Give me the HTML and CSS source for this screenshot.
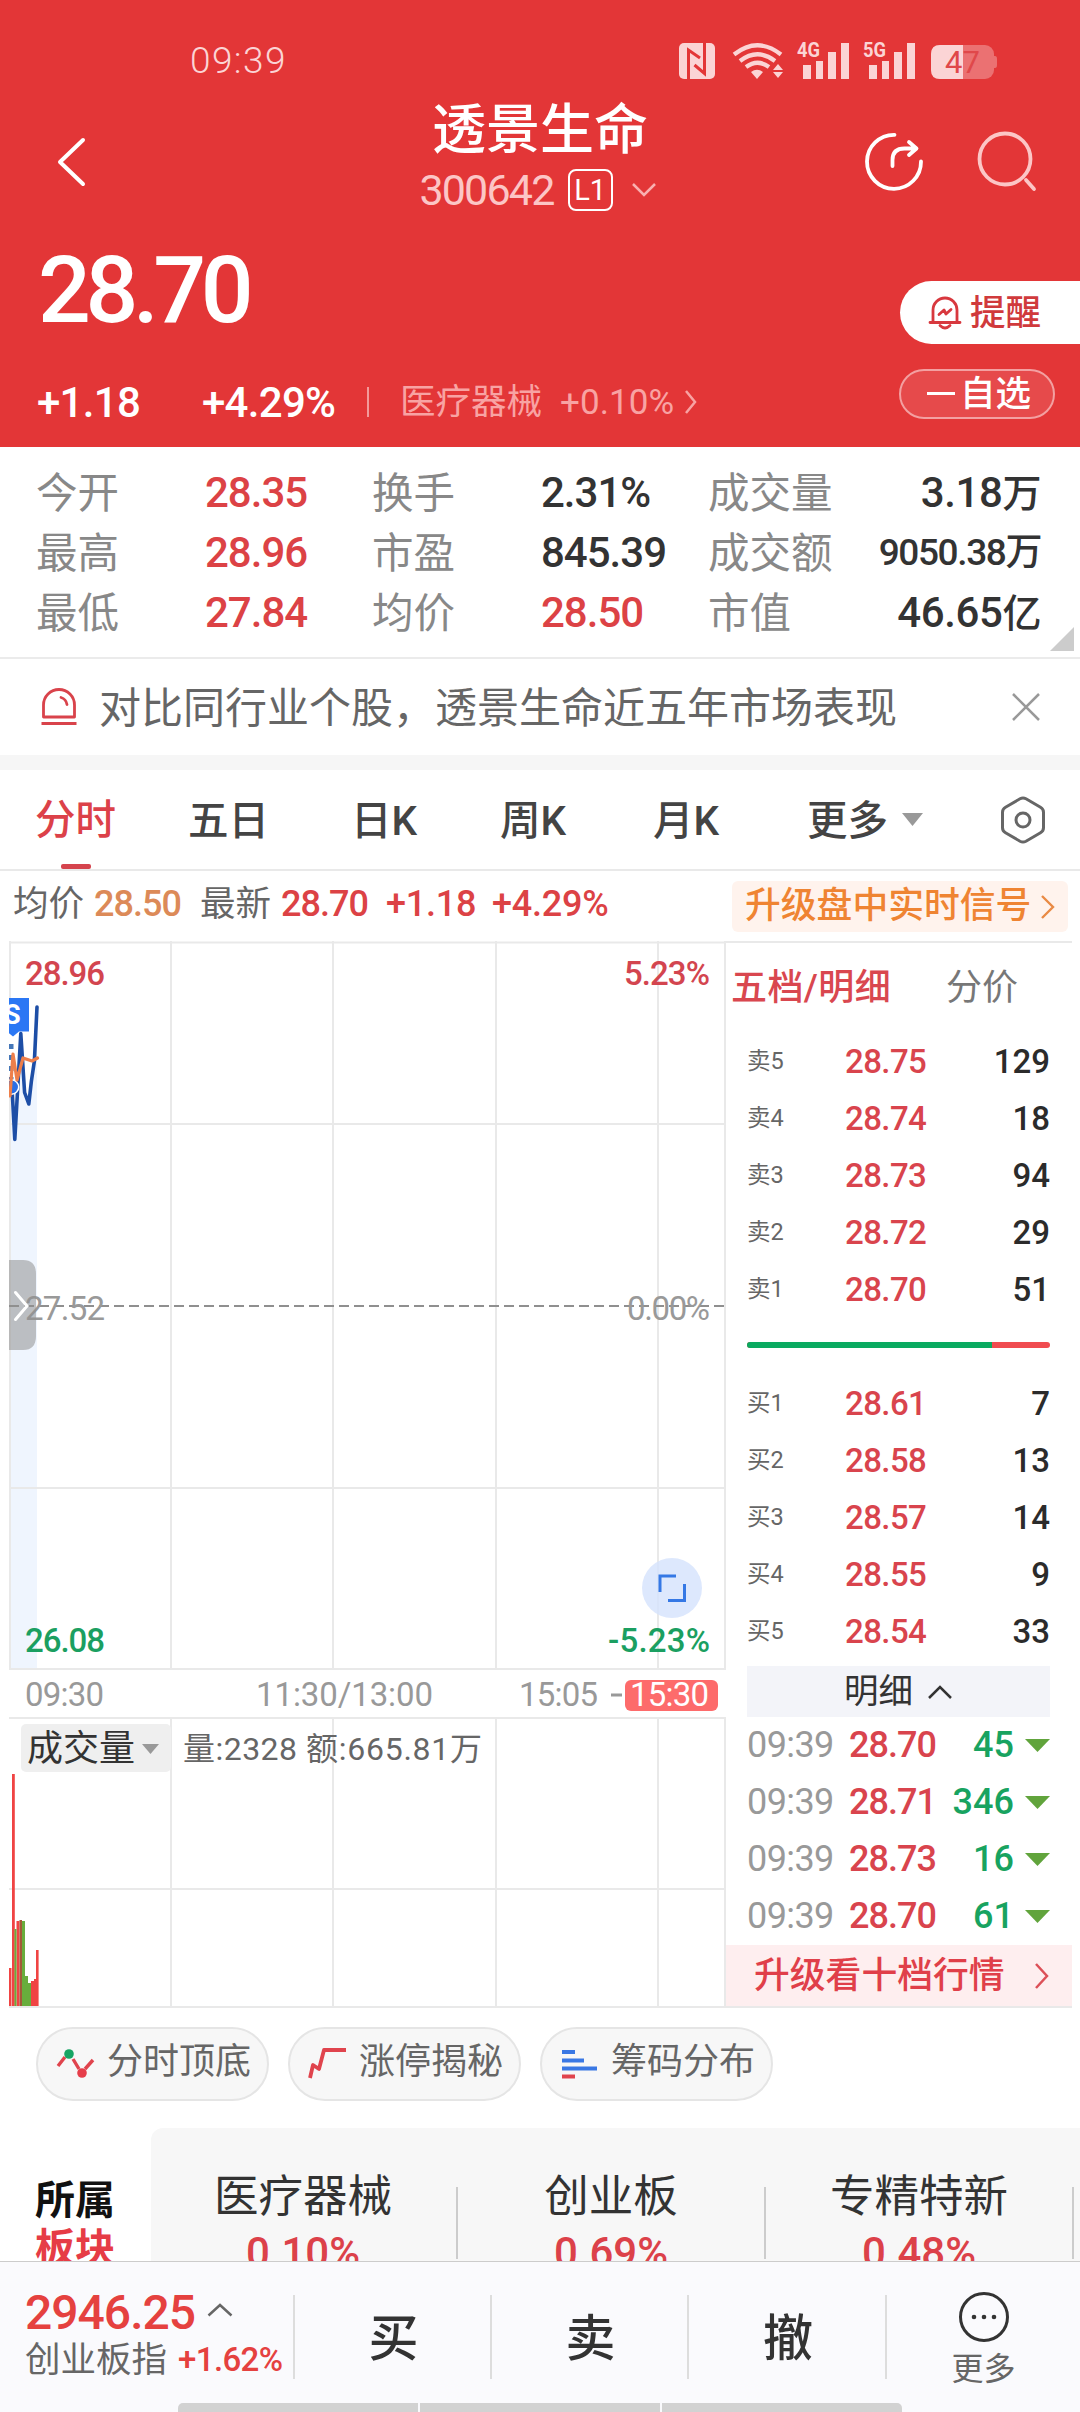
FILE: index.html
```html
<!DOCTYPE html>
<html lang="zh-CN">
<head>
<meta charset="utf-8">
<title>透景生命 300642</title>
<link rel="stylesheet" href="styles.css">
</head>
<body>
<div class="screen">
  <header class="hero">
    <div class="status">
      <span class="clock">09:39</span>
      <svg class="status-icons" width="320" height="50" viewBox="679 35 320 50">
        <g fill="#fbd4d5">
          <rect x="679" y="43" width="36" height="36" rx="5"/>
          <g fill="none" stroke="#fbd4d5" stroke-width="4.200">
            <path d="M734 54.500Q757.500 36 781 54.500"/>
            <path d="M740 61Q757.500 47.500 775 61"/>
            <path d="M746 67Q757.500 58.500 769 67"/>
          </g>
          <path d="M757 79l-6-7q6-4.500 12 0z"/>
          <path d="M778 64l5 6h-10zM778 78l5-6h-10z"/>
          <path d="M803 65h8v14h-8zM816 61h7v18h-7zM828 52h8v27h-8zM841 43h8v36h-8z"/>
          <path d="M869 65h8v14h-8zM882 61h7v18h-7zM894 52h8v27h-8zM907 43h8v36h-8z"/>
        </g>
        <path d="M688.500 79V50L700 58M704.500 43V73.500L694.500 65" fill="none" stroke="#e33637" stroke-width="3"/>
        <g class="net"><text x="797" y="57" textLength="23" lengthAdjust="spacingAndGlyphs">4G</text><text x="863" y="57" textLength="23" lengthAdjust="spacingAndGlyphs">5G</text></g>
        <rect x="931" y="45" width="63" height="34" rx="9" fill="#eb7172"/>
        <path d="M994 56h1q2 0 2 3v6q0 3-2 3h-1z" fill="#eb7172"/>
        <path d="M963 45v34h-23q-9 0-9-9V54q0-9 9-9z" fill="#fbd4d5"/>
        <text class="charge" x="945" y="73">47</text>
      </svg>
    </div>
    <div class="nav">
      <svg class="back" width="32" height="52" viewBox="0 0 32 52"><path d="M28 4L5 26l23 22" fill="none" stroke="#fff" stroke-width="4" stroke-linecap="round" stroke-linejoin="round"/></svg>
      <div class="title">
        <h1>透景生命</h1>
        <div class="code"><span>300642</span><b>L1</b><svg width="26" height="16" viewBox="0 0 26 16"><path d="M2 2l11 11L24 2" fill="none" stroke="#f9b0b0" stroke-width="2.500"/></svg></div>
      </div>
      <svg class="nav-icons" width="176" height="62" viewBox="863 131 176 62" fill="none" stroke-width="3.800" stroke-linecap="round" stroke-linejoin="round">
        <path d="M894.500 134.800A27 27 0 1 0 921 161.500" stroke="#fff"/>
        <path d="M892.500 166v-6q0-11.500 12-11.500h11M909 142l7.500 6.500L909 155" stroke="#fff"/>
        <circle cx="1005" cy="159" r="25.500" stroke="#fcc6c6"/>
        <path d="M1026 180l8 9" stroke="#fcc6c6"/>
      </svg>
    </div>
    <div class="price-row">
      <strong>28.70</strong>
      <button class="remind">
        <svg width="34" height="36" viewBox="0 0 34 36" fill="none" stroke="#d8383e" stroke-width="2.800" stroke-linecap="round" stroke-linejoin="round"><path d="M5 27V15a12 12 0 0 1 24 0v12M2 27.500h30M12 30.500q5 5 10 0M11 19.500l5-4.500 2 4 5-4.500"/></svg>
        <span>提醒</span>
      </button>
    </div>
    <div class="change-row">
      <span class="chg">+1.18</span><span class="chg pct">+4.29%</span><i class="bar"></i>
      <span class="ind">医疗器械</span><span class="ind-pct">+0.10%</span>
      <svg width="14" height="26" viewBox="0 0 14 26"><path d="M2 2l9 11-9 11" fill="none" stroke="#f8a3a3" stroke-width="2.500"/></svg>
      <button class="watch"><i></i><span>自选</span></button>
    </div>
  </header>

  <section class="quotes">
    <span>今开</span><b class="up">28.35</b><span>换手</span><b>2.31%</b><span>成交量</span><b class="end">3.18<em>万</em></b>
    <span>最高</span><b class="up">28.96</b><span>市盈</span><b>845.39</b><span>成交额</span><b class="end small">9050.38万</b>
    <span>最低</span><b class="up">27.84</b><span>均价</span><b class="up">28.50</b><span>市值</span><b class="end">46.65<em>亿</em></b>
    <i class="corner"></i>
  </section>

  <section class="notice">
    <svg width="38" height="40" viewBox="0 0 38 40" fill="none" stroke="#d9434b" stroke-width="2.800" stroke-linejoin="round"><path d="M3.500 30V18a15.500 15.500 0 0 1 31 0v12zM1.500 36.500h35"/><path d="M21 10.500q5 1.500 6 7" stroke-linecap="round"/></svg>
    <p>对比同行业个股，透景生命近五年市场表现</p>
    <svg width="30" height="30" viewBox="0 0 30 30"><path d="M2 2l26 26M28 2L2 28" stroke="#999" stroke-width="2.500"/></svg>
  </section>

  <nav class="tabs">
    <span class="on">分时</span><span>五日</span><span>日K</span><span>周K</span><span>月K</span><span>更多</span>
    <i class="down"></i>
    <svg width="46" height="48" viewBox="0 0 46 48" fill="none" stroke="#666" stroke-width="3"><path d="M20 2.800q3-1.600 6 0l14.500 8.400q3 1.700 3 5v15.600q0 3.300-3 5L26 45.200q-3 1.600-6 0L5.500 36.800q-3-1.700-3-5V16.200q0-3.300 3-5z"/><circle cx="23" cy="24" r="7"/></svg>
  </nav>

  <section class="legend">
    <span class="lbl">均价</span><span class="avg">28.50</span><span class="lbl">最新</span><span class="up">28.70</span><span class="up">+1.18</span><span class="up">+4.29%</span>
    <a class="signal"><span>升级盘中实时信号</span><svg width="16" height="26" viewBox="0 0 16 26"><path d="M2 2l11 11L2 24" fill="none" stroke="#e98a45" stroke-width="2.400"/></svg></a>
  </section>

  <section class="market">
    <svg class="chart" width="717" height="1067" viewBox="9 941 717 1067">
      <defs><clipPath id="plot"><rect x="9" y="941" width="717" height="1067"/></clipPath></defs>
      <path d="M9 1101l3-14 3 52 6-104 5 60 4 10 3-25 3-20 1-53V1669H9z" fill="#eff5fe" clip-path="url(#plot)"/>
      <g stroke="#e9e9e9" stroke-width="2" fill="none">
        <path d="M9 942.500H726M10 941V1669M171 941V1669M333 941V1669M496 941V1669M658 941V1669M725 941V1669"/>
        <path d="M9 1124H725M9 1488H725M9 1669H726M9 1718H726M9 1889H725M9 2007H726"/>
        <path d="M171 1718V2007M333 1718V2007M496 1718V2007M658 1718V2007M725 1718V2007"/>
      </g>
      <path d="M9 1306H724" stroke="#8f8f8f" stroke-width="2" stroke-dasharray="10 5"/>
      <g clip-path="url(#plot)" fill="none" stroke-linejoin="round" stroke-linecap="round">
        <path d="M11 1030v60" stroke="#fff" stroke-width="6" stroke-linecap="butt"/>
        <path d="M12 1088l2.800 51.500 6-106 3.800 59 4.200 11.500 2.600-23 3-20 2.600-54" stroke="#1d4ea6" stroke-width="3.600"/>
        <path d="M11 1044v36" stroke="#4577b8" stroke-width="5" stroke-dasharray="5 6" stroke-linecap="butt"/>
        <path d="M8 998h21v33.500h-10l-6 5-5-4z" fill="#2b77f4"/>
        <circle cx="11.500" cy="1087" r="7.200" fill="#2b6fe6" stroke="#fff" stroke-width="1.500"/>
        <path d="M10 1096l3-42 4 26 6-22 9 3 5.500-3" stroke="#ee7f4b" stroke-width="3.200"/>
        <text class="flag" x="4" y="1024">S</text>
      </g>
      <g class="axis">
        <text class="hi" x="25" y="985" textLength="80">28.96</text>
        <text class="hi" x="624" y="985" textLength="86">5.23%</text>
        <text class="mid" x="25" y="1320" textLength="80">27.52</text>
        <text class="mid" x="627" y="1320" textLength="83">0.00%</text>
        <text class="lo" x="25" y="1652" textLength="80">26.08</text>
        <text class="lo" x="608" y="1652" textLength="102">-5.23%</text>
        <text class="mid" x="25" y="1706" textLength="79">09:30</text>
        <text class="mid" x="256" y="1706" textLength="177">11:30/13:00</text>
        <text class="mid" x="519" y="1706" textLength="79">15:05</text>
        <path d="M611 1695h11" stroke="#999" stroke-width="3"/>
        <rect x="625" y="1680" width="93" height="31" rx="6" fill="#fd6b6b"/>
        <text class="inv" x="630" y="1706" textLength="79">15:30</text>
      </g>
      <path d="M9 1260h14q13 0 13 14v62q0 14-13 14H9z" fill="#8f8f8f" fill-opacity=".55"/>
      <path d="M15.500 1292.500l11.500 13.500-11.500 13.500" fill="none" stroke="#fff" stroke-width="3" stroke-linecap="round"/>
      <circle cx="672" cy="1588" r="30" fill="#d5e2fc" fill-opacity=".8"/>
      <path d="M660 1592v-16h16M668 1600.500h16.500v-16.500" fill="none" stroke="#3578e5" stroke-width="3"/>
      <rect x="21" y="1724" width="150" height="48" rx="5" fill="#efefef"/>
      <text class="picker" x="27" y="1761" textLength="108">成交量</text>
      <path d="M142 1744h17l-8.500 10z" fill="#999"/>
      <text class="vol" x="183" y="1760" textLength="114">量:2328</text>
      <text class="vol" x="306" y="1760" textLength="176">额:665.81万</text>
      <g fill="#f04443"><path d="M9 1968h2.500v38H9zM12 1774h2.800v232H12zM16.500 1921h3v85h-3zM31 1981h3v25h-3zM34 1979h2.500v27H34zM36 1950h2.600v56H36z"/></g>
      <path d="M19.500 1920h2.500v86h-2.500z" fill="#a35a38"/>
      <path d="M14.500 1929h2v77h-2zM22 1921h3v85h-3zM25 1976h3v30h-3zM28 1983h3v23h-3z" fill="#68ad3c"/>
    </svg>
    <aside class="book">
      <div class="book-tabs"><span class="on">五档/明细</span><span>分价</span></div>
      <div class="level"><i>卖5</i><b>28.75</b><span>129</span></div>
      <div class="level"><i>卖4</i><b>28.74</b><span>18</span></div>
      <div class="level"><i>卖3</i><b>28.73</b><span>94</span></div>
      <div class="level"><i>卖2</i><b>28.72</b><span>29</span></div>
      <div class="level"><i>卖1</i><b>28.70</b><span>51</span></div>
      <div class="ratio"><i></i></div>
      <div class="level"><i>买1</i><b>28.61</b><span>7</span></div>
      <div class="level"><i>买2</i><b>28.58</b><span>13</span></div>
      <div class="level"><i>买3</i><b>28.57</b><span>14</span></div>
      <div class="level"><i>买4</i><b>28.55</b><span>9</span></div>
      <div class="level"><i>买5</i><b>28.54</b><span>33</span></div>
      <div class="ticks-head"><span>明细</span><svg width="26" height="16" viewBox="0 0 26 16"><path d="M2 14L13 3l11 11" fill="none" stroke="#333" stroke-width="2.500"/></svg></div>
      <div class="tick"><i>09:39</i><b>28.70</b><span>45</span><em></em></div>
      <div class="tick"><i>09:39</i><b>28.71</b><span>346</span><em></em></div>
      <div class="tick"><i>09:39</i><b>28.73</b><span>16</span><em></em></div>
      <div class="tick"><i>09:39</i><b>28.70</b><span>61</span><em></em></div>
      <a class="upgrade"><span>升级看十档行情</span><svg width="16" height="28" viewBox="0 0 16 28"><path d="M2 2l11 12L2 26" fill="none" stroke="#dc5058" stroke-width="2.500"/></svg></a>
    </aside>
  </section>

  <section class="chips">
    <a><svg width="40" height="36" viewBox="0 0 40 36" fill="none" stroke="#e0444d" stroke-width="3.400"><path d="M2 20l7-9M17 13l6 10M29 23l8-9"/><circle cx="13" cy="8" r="4.800" fill="#17a564" stroke="none"/><circle cx="26" cy="27" r="4.800" fill="#e63e4a" stroke="none"/></svg>分时顶底</a>
    <a><svg width="40" height="36" viewBox="0 0 40 36" fill="none" stroke="#e0444d" stroke-width="3.800" stroke-linejoin="round"><path d="M2 32l3-13 6 4 5-19h22"/></svg>涨停揭秘</a>
    <a><svg width="40" height="36" viewBox="0 0 40 36" stroke="#3a78e4" stroke-width="4"><path d="M2 6h13M2 14.500h22M2 22.500h35"/><path d="M2 30.500h13" stroke="#e0444d"/></svg>筹码分布</a>
  </section>

  <section class="sectors">
    <div class="sector-title">所属<em>板块</em></div>
    <div class="sector-list">
      <div>医疗器械<b>0.10%</b></div>
      <div>创业板<b>0.69%</b></div>
      <div>专精特新<b>0.48%</b></div>
    </div>
  </section>

  <footer class="dock">
    <div class="index">
      <div class="index-top"><b>2946.25</b><svg width="26" height="14" viewBox="0 0 26 14"><path d="M1.500 12.500L13 2l11.500 10.500" fill="none" stroke="#666" stroke-width="2.500"/></svg></div>
      <div class="index-sub">创业板指<em>+1.62%</em></div>
    </div>
    <div class="act">买</div><div class="act">卖</div><div class="act">撤</div>
    <div class="more"><svg width="52" height="52" viewBox="0 0 52 52"><circle cx="26" cy="26" r="23.500" fill="none" stroke="#333" stroke-width="3"/><circle cx="16" cy="26" r="2.300" fill="#333"/><circle cx="26" cy="26" r="2.300" fill="#333"/><circle cx="36" cy="26" r="2.300" fill="#333"/></svg><span>更多</span></div>
    <div class="home"><i></i><i></i><i></i></div>
  </footer>
</div>
</body>
</html>
```
FILE: styles.css
```css
* { box-sizing: border-box; margin: 0; padding: 0; }
body { width: 1080px; height: 2412px; overflow: hidden; background: #fff; font-family: Roboto, "Noto Sans CJK SC", sans-serif; color: #333; }
i, em { font-style: normal; }
b, strong, h1 { font-weight: 500; }
svg { display: block; flex: none; }
span, p, a, b { white-space: nowrap; }
button { border: 0; background: none; font: inherit; }
.screen { display: flex; flex-direction: column; width: 1080px; height: 2412px; overflow: hidden; }
.up { color: #dc4245; }

.hero { flex: none; height: 447px; background: #e33637; color: #fff; }
.status { display: flex; height: 100px; padding: 35px 81px 0 190px; justify-content: space-between; }
.clock { margin-top: 7px; font-size: 37px; line-height: 38px; font-weight: 300; color: #fbd4d5; letter-spacing: 1.4px; }
.net { font-size: 20px; font-weight: 700; fill: #fbd4d5; }
.charge { font-size: 31px; fill: #e0484a; }
.nav { display: grid; grid-template-columns: 378px 324px 1fr; height: 120px; }
.back { margin: 36px 0 0 55px; }
.title { display: flex; flex-direction: column; align-items: center; }
.title h1 { font-size: 54px; line-height: 56px; padding-top: 3px; }
.code { display: flex; align-items: center; height: 62px; margin-left: -4px; color: #fcc6c6; font-size: 43px; }
.code span { letter-spacing: -1.8px; }
.code b { width: 45px; height: 42px; margin: 0 18px 0 14px; border: 2.5px solid #fff; border-radius: 8px; color: #fff; font-size: 29px; line-height: 38px; text-align: center; font-weight: 400; }
.nav-icons { margin: 31px 0 0 161px; }
.price-row { display: flex; justify-content: space-between; height: 134px; padding-left: 38px; }
.price-row strong { font-size: 93px; line-height: 110px; padding-top: 16px; letter-spacing: -5.4px; }
.remind { display: flex; align-items: center; width: 180px; height: 63px; margin-top: 61px; padding-left: 28px; gap: 8px; border-radius: 32px 0 0 32px; background: #fff; color: #d03a3c; font-size: 35.500px; font-weight: 500; }
.remind span { line-height: 40px; }
.change-row { display: grid; grid-template-columns: 165px 165px 33px 160px 124px 216px 156px; align-items: center; height: 64px; padding-left: 37px; margin-top: 16px; }
.chg { font-size: 42px; font-weight: 500; line-height: 60px; letter-spacing: -.7px; padding-top: 1px; }
.bar { width: 2px; height: 30px; background: #f39a9a; }
.ind { font-size: 35.500px; line-height: 40px; color: #f8a3a3; }
.ind-pct { font-size: 35px; color: #f8a3a3; letter-spacing: .1px; }
.watch { display: flex; align-items: center; width: 156px; height: 50px; margin: -17px 0 0 -1px; padding-left: 26px; border: 2px solid #f3a0a1; border-radius: 25px; background: #e64a4b; color: #fff; font-size: 35.500px; font-weight: 500; }
.watch i { width: 28px; height: 3px; margin-right: 5px; background: #fff; }
.watch span { line-height: 40px; }

.quotes { flex: none; position: relative; display: grid; grid-template-columns: 169px 167px 169px 167px 141px 192px; grid-auto-rows: 60px; height: 212px; padding: 16px 38px 0 36px; border-bottom: 2px solid #ebebeb; font-size: 41.500px; line-height: 60px; }
.quotes span { color: #888; padding-top: 1px; }
.quotes b { font-size: 42px; letter-spacing: -1px; }
.quotes .end { text-align: right; letter-spacing: -.4px; }
.quotes em { font-size: 39px; }
.quotes .small { font-size: 37px; letter-spacing: -1.400px; }
.corner { position: absolute; right: 6px; bottom: 6px; width: 24px; height: 24px; background: #ccc; clip-path: polygon(100% 0, 100% 100%, 0 100%); }

.notice { flex: none; display: flex; align-items: center; height: 96px; padding: 0 39px 0 40px; }
.notice p { margin: 0 auto 0 21px; padding-top: 3px; font-size: 42px; line-height: 60px; color: #666; }
.tabs { flex: none; display: grid; grid-template-columns: 153px 163px 149px 153px 154px 95px 98px 1fr; align-items: center; height: 116px; padding-left: 35px; border-top: 15px solid #f6f6f6; border-bottom: 2px solid #e9e9e9; font-size: 40.500px; line-height: 58px; color: #444; font-weight: 500; }
.tabs span { padding-top: 2px; }
.tabs .on { display: flex; flex-direction: column; height: 99px; padding-top: 21px; color: #dc4149; }
.tabs .on::after { content: ""; width: 30px; height: 5px; margin: 15px 0 0 26px; border-radius: 2px; background: #d5444d; }
.down { width: 21px; height: 13px; background: #999; clip-path: polygon(0 0, 100% 0, 50% 100%); }

.legend { flex: none; display: grid; grid-template-columns: 81px 106px 81px 105px 106px 240px 336px; height: 70px; padding: 10px 0 0 13px; font-size: 36px; line-height: 47px; font-weight: 500; letter-spacing: -1px; }
.legend > span:nth-child(n+5) { letter-spacing: -.2px; }
.legend .lbl { font-size: 35.500px; font-weight: 400; color: #666; letter-spacing: 0; }
.avg { color: #dc8a58; }
.signal { display: flex; align-items: center; height: 51px; padding-left: 13px; gap: 9px; border-radius: 6px; background: #fff3ed; color: #ef8432; font-size: 35.800px; letter-spacing: 0; }
.signal span { padding-bottom: 1px; }

.market { flex: none; display: flex; height: 1067px; padding-left: 9px; }
.flag { font-size: 27px; font-weight: 700; fill: #fff; }
.axis { font-size: 33px; }
.hi { fill: #d3454f; font-weight: 500; }
.mid { fill: #999; }
.lo { fill: #1b9f61; font-weight: 500; }
.inv { fill: #fff; }
.picker { font-size: 36px; fill: #333; }
.vol { font-size: 32px; fill: #666; }

.book { width: 346px; height: 1067px; border-top: 2px solid #e9e9e9; border-bottom: 2px solid #e9e9e9; font-size: 33px; }
.book-tabs { display: flex; height: 90px; padding: 19px 0 0 5px; gap: 55px; font-size: 36px; line-height: 52px; color: #777; }
.book-tabs .on { color: #d9474f; font-weight: 500; letter-spacing: .4px; }
.level { display: grid; grid-template-columns: 98px 80px 125px; height: 57px; padding-left: 21px; line-height: 57px; }
.level i { font-size: 23.500px; color: #666; }
.level b { color: #d9444d; letter-spacing: -.6px; }
.level span { text-align: right; color: #2b2b2b; font-weight: 500; }
.ratio { width: 303px; height: 6px; margin: 24px 0 27px 21px; border-radius: 3px; overflow: hidden; background: #f04c50; }
.ratio i { display: block; width: 245px; height: 6px; background: #0aaa60; }
.ticks-head { display: flex; justify-content: center; align-items: center; width: 303px; height: 51px; margin: 6px 0 0 21px; gap: 14px; background: #f3f4f9; font-size: 34.500px; line-height: 46px; color: #333; }
.ticks-head span { padding-bottom: 1px; }
.tick { display: grid; grid-template-columns: 102px 84px 81px 36px; align-items: center; height: 57px; padding-left: 21px; font-size: 36px; line-height: 57px; letter-spacing: -.6px; }
.tick i { color: #999; }
.tick b { color: #d9444d; letter-spacing: -1px; }
.tick span { text-align: right; color: #18a360; font-weight: 500; letter-spacing: 0; }
.tick em { justify-self: end; width: 25px; height: 13px; background: #61a43c; clip-path: polygon(0 0, 100% 0, 50% 100%); }
.upgrade { display: flex; align-items: center; justify-content: space-between; height: 61px; padding: 0 22px 0 28px; background: #feeeef; color: #e03f49; font-size: 35.800px; font-weight: 500; }
.upgrade span { line-height: 50px; }

.chips { flex: none; display: flex; gap: 19px; height: 120px; padding: 19px 36px 0; }
.chips a { display: flex; align-items: center; width: 233px; height: 74px; padding: 0 0 5px 18px; gap: 11px; border: 2px solid #e5e5e5; border-radius: 37px; background: #f7f7f7; font-size: 36px; line-height: 50px; color: #666; }
.chips svg { margin-top: 5px; }

.sectors { flex: none; display: flex; height: 133px; overflow: hidden; }
.sector-title { width: 151px; padding: 48px 0 0 35px; font-size: 40px; line-height: 50px; font-weight: 700; color: #111; }
.sector-title em { display: block; color: #e63c46; line-height: 46px; }
.sector-list { display: flex; flex: 1; border-radius: 12px 0 0 0; background: #f7f7f7; overflow: hidden; }
.sector-list div { flex: none; width: 308px; height: 133px; padding: 39px 4px 0 0; text-align: center; font-size: 44.500px; line-height: 60px; background: linear-gradient(#ccc, #ccc) no-repeat 305px 59px / 2px 72px; }
.sector-list b { display: block; font-size: 42px; line-height: 52px; color: #dc4149; }

.dock { flex: none; display: grid; grid-template-columns: 295px 197px 197px 198px 193px; grid-template-rows: 141px 9px; height: 151px; border-top: 1px solid #ccc; background: #fafafd; }
.index { padding-left: 25px; background: linear-gradient(#ddd, #ddd) no-repeat 100% 33px / 2px 84px; }
.index-top { display: flex; align-items: center; height: 68px; padding-top: 33px; gap: 12px; }
.index-top b { font-size: 48px; line-height: 40px; color: #e5413f; letter-spacing: -1px; }
.index-top svg { margin-bottom: 6px; }
.index-sub { display: flex; gap: 11px; padding-top: 3px; font-size: 35.500px; line-height: 54px; color: #666; white-space: nowrap; }
.index-sub em { font-size: 33px; font-weight: 500; color: #e5413f; letter-spacing: -.6px; }
.act { padding-top: 42px; text-align: center; font-size: 50px; line-height: 70px; font-weight: 500; background: linear-gradient(#ddd, #ddd) no-repeat 100% 33px / 2px 84px; }
.more { display: flex; flex-direction: column; align-items: center; padding-top: 29px; font-size: 32px; line-height: 53px; color: #666; }
.home { grid-column: 1 / -1; display: flex; justify-content: center; gap: 2px; }
.home i { width: 240px; height: 9px; background: #d2d2d2; }
.home i:first-child { border-radius: 5px 0 0 0; }
.home i:last-child { border-radius: 0 5px 0 0; }
```
